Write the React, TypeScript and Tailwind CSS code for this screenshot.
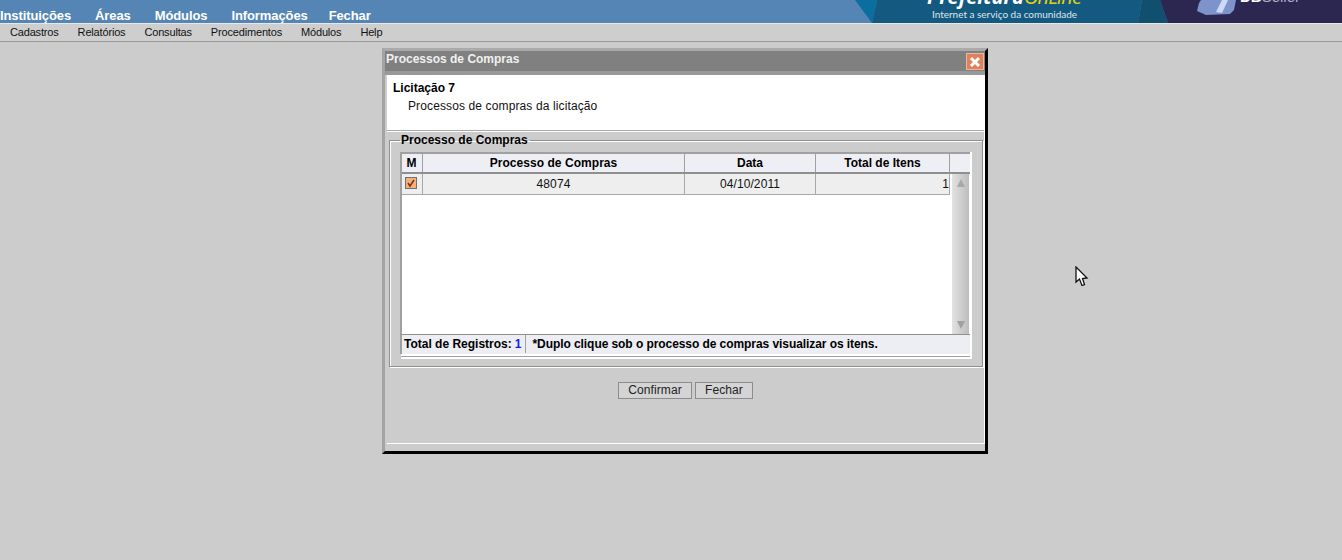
const topMenu = ["Instituições", "Áreas", "Módulos", "Informações", "Fechar"];
const subMenu = ["Cadastros", "Relatórios", "Consultas", "Procedimentos", "Módulos", "Help"];

const Banner = () => {
  return (
    <div className="absolute left-[850px] top-0 h-[23px] w-[492px] overflow-hidden font-normal tracking-normal">
      <svg width="492" height="23" className="absolute left-0 top-0">
        <polygon points="5,0 27,0 22,23" fill="#0a6f9f" />
        <polygon points="27,0 292,0 288,23 22,23" fill="#145a80" />
        <polygon points="292,0 310,0 318,23 288,23" fill="#10506e" />
        <polygon points="310,0 492,0 492,23 318,23" fill="#2c2750" />
        <path d="M349 3 L351 0 L386 0 L384 10 L380 14 L356 15 L347 11 Z" fill="#7d93cc" />
        <path d="M366 12 L372 0 L378 0 L372 13 Z" fill="#cfd8f4" />
      </svg>
      <div className="absolute left-[77px] top-[-16px] flex whitespace-nowrap text-[20px] leading-[26px] italic font-['Open_Sans',sans-serif]">
        <span className="font-bold text-white">Prefeitura</span>
        <span className="tracking-[-0.8px] text-[#e8d20f]">OnLine</span>
      </div>
      <div className="absolute left-[82px] top-[8px] whitespace-nowrap text-[10px] leading-[12px] tracking-[-0.02px] text-[#dfe6ec] font-['Lato',sans-serif]">
        Internet a serviço da comunidade
      </div>
      <div className="absolute left-[390px] top-[-11px] whitespace-nowrap text-[15px] leading-[15px] text-white font-['Liberation_Sans',sans-serif]">
        <b>DB</b>
        <span className="text-[#b0b0c8]">Seller</span>
      </div>
    </div>
  );
};

const Dialog = () => {
  return (
    <div className="absolute left-[382px] top-[48px] flex h-[406px] w-[606px] flex-col border-b-[3px] border-l-[3px] border-r-[3px] border-t-[3px] border-b-black border-l-[#a3a3a3] border-r-black border-t-[#aaaaaa] bg-[#cccccc]">
      <div className="flex h-[20px] shrink-0 items-start justify-between bg-[#808080] pr-[1px]">
        <span className="pl-[1px] text-[12px] font-bold leading-[16px] text-[#f0f0f0]">Processos de Compras</span>
        <span className="mt-[2px] flex h-[17px] w-[18px] items-center justify-center border border-[#e8b8a0] bg-[#e0805c]">
          <svg width="12" height="12" viewBox="0 0 12 12">
            <path d="M2 2 L10 10 M10 2 L2 10" stroke="#ffffff" strokeWidth="3" />
          </svg>
        </span>
      </div>
      <div className="h-[4px] shrink-0 bg-[#999999]" />

      <div className="ml-[2px] flex min-h-0 flex-1 flex-col border-b border-r border-white">
        <div className="h-[56px] shrink-0 border-b border-[#a8a8a8] bg-white pl-[6px] pt-[5px] text-[12px] leading-[17px] text-[#111111]">
          <div className="font-bold text-black">Licitação 7</div>
          <div className="mt-[1px] pl-[15px] tracking-[0.12px]">Processos de compras da licitação</div>
        </div>
        <div className="h-[1px] shrink-0 bg-white" />

        <div className="px-[2px] pt-[2px]">
          <fieldset className="h-[233px] w-[592px] border border-[#8e8e8e] px-[10px] shadow-[inset_1px_1px_0_#ffffff,1px_1px_0_#ffffff]">
            <legend className="pl-[1px] pr-[2px] text-[12px] font-bold leading-[13px] text-black">Processo de Compras</legend>
            <div className="mt-[5px] h-[207px] w-[572px] border-r-2 border-white">
              <div className="flex h-[202px] w-[570px] flex-col border-l-2 border-t-2 border-[#a0a0a0] bg-white">
                <div className="grid h-[20px] shrink-0 grid-cols-[21px_262px_131px_134px_1fr] border-b-2 border-[#8f8f8f] bg-[#eeeff4] text-center text-[12px] font-bold leading-[18px] text-black">
                  <div className="border-r border-[#a0a0a0] pr-[1px]">M</div>
                  <div className="border-r border-[#a0a0a0] tracking-[0.05px]">Processo de Compras</div>
                  <div className="border-r border-[#a0a0a0]">Data</div>
                  <div className="border-r border-[#a0a0a0]">Total de Itens</div>
                  <div />
                </div>
                <div className="flex min-h-0 flex-1 gap-[2px]">
                  <div className="w-[548px] shrink-0">
                    <div className="grid h-[21px] grid-cols-[21px_262px_131px_134px] border-b border-[#a8a8a8] bg-[#eeeeee] text-center text-[12px] leading-[20px] tracking-[0.1px] text-[#111111]">
                      <div className="flex items-center justify-center border-r border-[#a8a8a8] pb-[2px] pr-[2px]">
                        <span className="flex h-[12px] w-[12px] items-center justify-center border border-[#707070] bg-[#f2b27e]">
                          <svg width="10" height="10" viewBox="0 0 10 10">
                            <path d="M2 5 L4 8 L8 2" fill="none" stroke="#8a3010" strokeWidth="1.6" />
                          </svg>
                        </span>
                      </div>
                      <div className="border-r border-[#a8a8a8]">48074</div>
                      <div className="border-r border-[#a8a8a8]">04/10/2011</div>
                      <div className="border-r border-[#a8a8a8] text-right">1</div>
                    </div>
                  </div>
                  <div className="flex w-[17px] shrink-0 flex-col items-center justify-between bg-gradient-to-r from-[#e2e2e2] to-[#bdbdbd] pb-[5px] pt-[5px]">
                    <svg width="8" height="8" viewBox="0 0 8 8">
                      <polygon points="4,0 8,8 0,8" fill="#a8a8a8" />
                    </svg>
                    <svg width="8" height="8" viewBox="0 0 8 8">
                      <polygon points="0,0 8,0 4,8" fill="#a0a0a0" />
                    </svg>
                  </div>
                </div>
                <div className="flex h-[20px] shrink-0 items-center border-t border-[#8f8f8f] bg-[#eceef3] pb-[1px] pl-[2px] text-[12px] font-bold text-black">
                  <span>Total de Registros:</span>
                  <span className="ml-[3px] border-r border-[#a0a0a0] pr-[4px] text-[#1a1ae0]">1</span>
                  <span className="ml-[6px] tracking-[-0.07px]">*Duplo clique sob o processo de compras visualizar os itens.</span>
                </div>
              </div>
              <div className="ml-[1px] h-[5px] w-[569px] bg-white pt-[2px]">
                <div className="h-px bg-[#a0a0a0]" />
              </div>
            </div>
          </fieldset>
        </div>

        <div className="mt-[15px] flex justify-center gap-[3px] text-[12px] tracking-[0.1px] text-[#222222]">
          <button className="h-[17px] w-[74px] border border-[#8c8c8c] bg-[#d4d4d4] leading-[15px]">Confirmar</button>
          <button className="h-[17px] w-[58px] border border-[#8c8c8c] bg-[#d4d4d4] leading-[15px]">Fechar</button>
        </div>
      </div>
      <div className="h-[7px] shrink-0" />
    </div>
  );
};

export default function App() {
  return (
    <div className="relative h-[560px] w-[1342px] overflow-hidden bg-[#cccccc] font-['Liberation_Sans',Arial,sans-serif]">
      <header className="relative flex h-[23px] items-end gap-[24px] bg-[#5585b5] text-[13px] font-bold leading-[15px] tracking-[-0.1px] text-white">
        <Banner />
        {topMenu.map((item) => (
          <span key={item} className="last:-ml-[3px]">
            {item}
          </span>
        ))}
      </header>
      <div className="h-[1px] bg-[#e8e8e8]" />
      <nav className="flex h-[18px] items-center gap-[19px] border-b border-[#999999] bg-[#cecece] pl-[10px] text-[11px] tracking-[-0.17px] text-[#111111]">
        {subMenu.map((item) => (
          <span key={item}>{item}</span>
        ))}
      </nav>
      <Dialog />
      <svg width="14" height="22" viewBox="0 0 14 22" className="absolute left-[1075px] top-[266px]">
        <path d="M1 1 L1 16 L4.5 13 L7 19.5 L9.5 18.5 L7.5 12.5 L12 12 Z" fill="#ffffff" stroke="#111111" strokeWidth="1.3" />
      </svg>
    </div>
  );
}
